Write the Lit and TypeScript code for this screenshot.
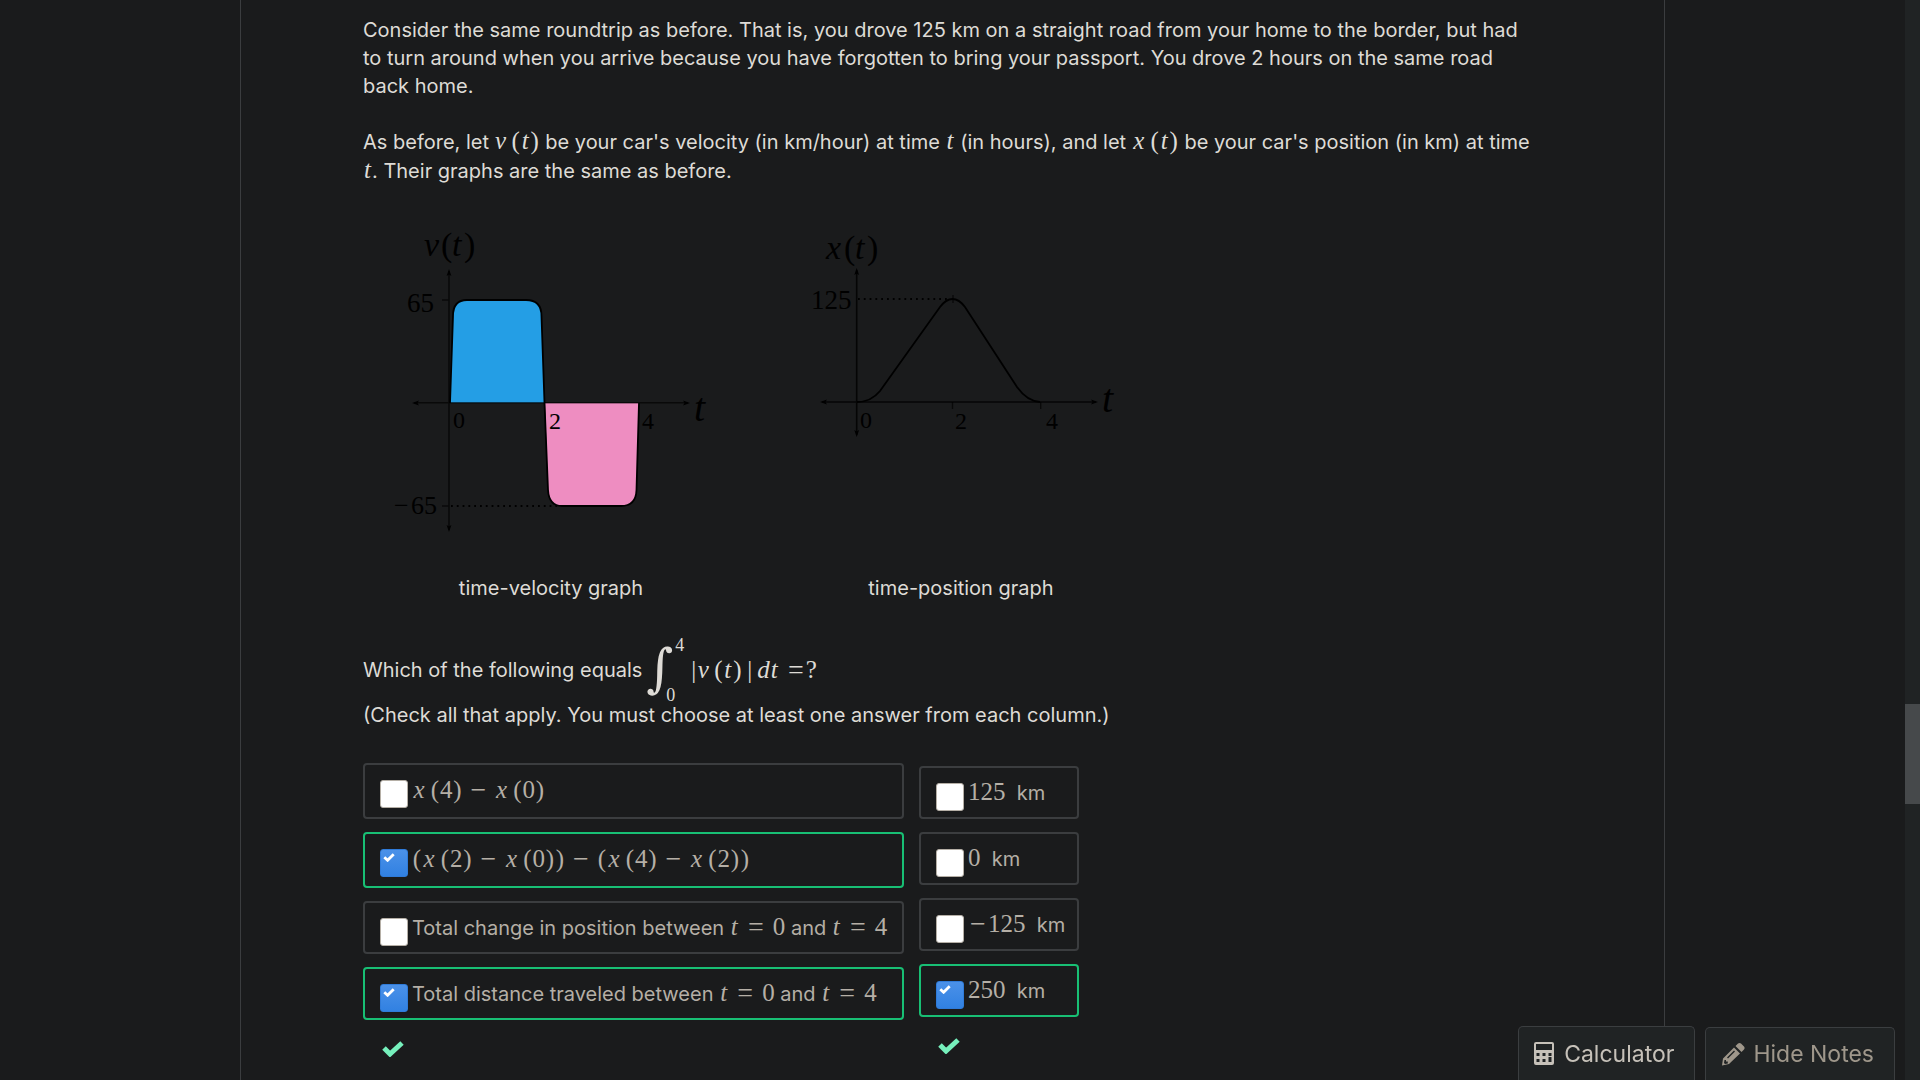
import { LitElement, html, svg, css } from "lit";
import { customElement, property } from "lit/decorators.js";

const KINDS: Record<string, string> = {
  x: "var wide",
  v: "var mid",
  d: "var mid",
  t: "var",
  "(": "open",
  ")": "close",
  "|": "bar",
  "−": "op",
  "=": "op rel",
  "~": "neg",
  "?": "query",
};

/** Typesets a short formula. "~" stands for a unary minus. */
const math = (source: string) => html`<span class="math"
  >${[...source.replace(/ /g, "")].map(
    (c) => html`<span class=${KINDS[c] ?? "num"}>${c === "~" ? "−" : c}</span>`
  )}</span
>`;

const mathStyles = css`
  .math {
    font-family: "Liberation Serif", "Times New Roman", serif;
    font-size: 25px;
    line-height: 1;
    white-space: nowrap;
  }
  .math span {
    display: inline-block;
    text-align: center;
    line-height: 1;
  }
  .math .var {
    font-style: italic;
    min-width: 9px;
  }
  .math .mid {
    min-width: 12px;
  }
  .math .wide {
    min-width: 14px;
  }
  .math .open,
  .math .close {
    min-width: 10px;
  }
  .math .var + .open,
  .math .close + .bar {
    margin-left: 4px;
  }
  .math .bar {
    min-width: 7px;
  }
  .math .close + .bar {
    margin-right: 4px;
  }
  .math .op,
  .math .neg {
    min-width: 20px;
    font-size: 28px;
    line-height: 0;
    vertical-align: -1px;
  }
  .math .op {
    margin: 0 6px;
  }
  .math .rel {
    margin: 0 7px;
  }
  .math .rel:has(+ .query) {
    margin-right: 0;
  }
`;

@customElement("answer-option")
export class AnswerOption extends LitElement {
  @property({ type: Boolean }) checked = false;
  @property({ type: Boolean }) tall = false;
  @property({ attribute: false }) content: unknown = "";

  static styles = [
    mathStyles,
    css`
      :host {
        display: block;
      }
      .option {
        box-sizing: border-box;
        display: flex;
        align-items: center;
        gap: 4px;
        min-height: 53px;
        padding: 0 15px;
        border: 2px solid #3b3d3f;
        border-radius: 4px;
        color: #b5afa6;
        white-space: nowrap;
        cursor: pointer;
      }
      .tall {
        min-height: 56px;
      }
      .correct {
        border-color: #18bf74;
      }
      .tick {
        display: grid;
        padding-top: 8px;
      }
      .tall .tick {
        padding-top: 6px;
      }
      .box,
      .mark {
        grid-area: 1 / 1;
      }
      .box {
        appearance: none;
        box-sizing: border-box;
        width: 28px;
        height: 28px;
        margin: 0;
        border: 1px solid #b5afa6;
        border-radius: 3px;
        background: #fff;
      }
      .box:checked {
        border-color: #2f7bd9;
        background: linear-gradient(#4b91e8, #3181e2);
      }
      .mark {
        width: 12px;
        height: 9px;
        margin: 4px 3px;
        pointer-events: none;
      }
    `,
  ];

  render() {
    return html`<label
      class="option ${this.tall ? "tall" : ""} ${this.checked ? "correct" : ""}"
    >
      <span class="tick">
        <input class="box" type="checkbox" .checked=${this.checked} />
        ${this.checked
          ? html`<svg class="mark" viewBox="0 0 12 9" aria-hidden="true">
              <path d="M1.3 4.3 4.6 7.3 10.7 1.3" fill="none" stroke="#fff" stroke-width="2.8" />
            </svg>`
          : ""}
      </span>
      <span>${this.content}</span>
    </label>`;
  }
}

const arrow = (x: number, y: number, angle: number) =>
  svg`<path d="M0 0 L-7 -2.4 L-5.4 0 L-7 2.4 Z" fill="#000" transform="translate(${x} ${y}) rotate(${angle})" />`;

@customElement("app-root")
export class AppRoot extends LitElement {
  static styles = [
    mathStyles,
    css`
      :host {
        display: block;
        font-family: Inter, "Liberation Sans", sans-serif;
        font-size: 20px;
        line-height: 28px;
        color: #dedbd6;
      }
      .screen {
        display: flex;
        height: 100vh;
        overflow: hidden;
        background: #1a1b1c;
      }
      .page {
        flex: 1;
        padding: 0 240px;
        overflow: hidden;
      }
      .lesson {
        box-sizing: border-box;
        min-height: 100%;
        padding: 16px 128px 0 122px;
        border: solid #3b3d3f;
        border-width: 0 1px;
      }
      p {
        margin: 0 0 28px;
      }
      .lead {
        margin-bottom: 24px;
        line-height: 29px;
      }
      .figures {
        display: flex;
        gap: 34px;
      }
      figure {
        width: 376px;
        margin: 0;
      }
      .graph {
        display: block;
        width: 100%;
        margin-bottom: 24px;
        font-family: "Liberation Serif", "Times New Roman", serif;
      }
      .graph .it {
        font-style: italic;
      }
      figcaption {
        text-align: center;
      }
      .question {
        display: flex;
        align-items: center;
        height: 63px;
        margin: 36px 0 0;
      }
      .integral {
        display: flex;
        align-items: center;
        margin: 0 6px 0 4px;
        font-family: "Liberation Serif", serif;
      }
      .sign {
        width: 20px;
        padding-bottom: 4px;
        font-family: "DejaVu Serif", "Liberation Serif", serif;
        font-size: 52px;
        font-style: italic;
        line-height: 52px;
      }
      .limits {
        display: flex;
        flex-direction: column;
        justify-content: space-between;
        height: 66px;
        font-size: 18px;
        line-height: 16px;
      }
      .upper {
        padding-left: 9px;
      }
      .hint {
        margin-bottom: 34px;
      }
      .columns {
        display: flex;
        align-items: flex-start;
        gap: 15px;
      }
      .answers {
        display: flex;
        flex-direction: column;
        gap: 13px;
      }
      .first {
        width: 541px;
      }
      .second {
        width: 160px;
        padding-top: 3px;
      }
      .result {
        width: 22px;
        height: 16px;
        margin: 8px 19px;
      }
      .track {
        flex: none;
        box-sizing: border-box;
        width: 15px;
        padding-top: 704px;
        background: #202324;
      }
      .thumb {
        height: 100px;
        background: #46494b;
      }
      .tools {
        position: fixed;
        right: 25px;
        bottom: 0;
        display: flex;
        align-items: flex-end;
        gap: 10px;
      }
      .tool {
        display: flex;
        align-items: center;
        gap: 10px;
        height: 54px;
        padding: 0 20px 0 15px;
        border: 1px solid #3b3e40;
        border-bottom: 0;
        border-radius: 5px 5px 0 0;
        background: #202324;
        color: #c6c1b9;
        font: inherit;
        font-size: 23px;
      }
      .notes {
        gap: 8px;
        height: 53px;
        color: #9f978b;
      }
      .tool svg {
        width: 20px;
        height: 23px;
      }
      .tool .pencil {
        width: 24px;
        height: 24px;
      }
    `,
  ];

  private velocityGraph() {
    return svg`<svg class="graph" viewBox="1 0 376 340" role="img" aria-label="Velocity against time">
      <path d="M88 193 L91 106 Q91 90 105 90 H164 Q179.500 90 179.500 106 L182.500 193 Z" fill="#249ee5" />
      <path d="M183 193 L186 280 Q187 296 200 296 H259 Q274 296 274.500 280 L277 193 Z" fill="#ee8dc1" />
      <g fill="none" stroke="#000">
        <path d="M52 192.700 H326 M87 61 V320 M80 90 H87 M80 296 H87" stroke-opacity="0.65" stroke-width="1.600" />
        <path d="M89 296 H196" stroke-width="1.800" stroke-dasharray="1.800 4" />
        <path d="M88 193 L91 106 Q91 90 105 90 H164 Q179.500 90 179.500 106 L182.500 193 L186 280 Q187 296 200 296 H259 Q274 296 274.500 280 L277 193" stroke-width="1.800" />
      </g>
      ${arrow(328, 193, 0)} ${arrow(50, 193, 180)} ${arrow(87, 59, -90)} ${arrow(87, 322, 90)}
      <g font-size="26">
        <text class="it" y="46" font-size="34"><tspan x="62">v</tspan><tspan x="90">t</tspan></text>
        <text y="46" font-size="34"><tspan x="79">(</tspan><tspan x="102">)</tspan></text>
        <text x="45" y="102" font-size="27">65</text>
        <text y="304"><tspan x="32">−</tspan><tspan x="49">65</tspan></text>
        <text y="218" font-size="24"><tspan x="91">0</tspan></text>
        <text y="219" font-size="24"><tspan x="187">2</tspan><tspan x="280">4</tspan></text>
        <text class="it" x="332" y="211" font-size="40">t</text>
      </g>
    </svg>`;
  }

  private positionGraph() {
    return svg`<svg class="graph" viewBox="1 0 376 340" role="img" aria-label="Position against time">
      <g fill="none" stroke="#000">
        <path d="M50 192 H324 M84.700 60 V225" stroke-opacity="0.8" stroke-width="1.600" />
        <path d="M180.500 192 V199 M268.700 192 V199 M181 85 V93" stroke-opacity="0.65" stroke-width="1.400" />
        <path d="M86 89 H176" stroke-width="1.800" stroke-dasharray="1.800 4" />
        <path d="M85 192 Q99 192 108 181 L168 97 Q174 89 180.500 89 Q187 89 193 97 L245 177 Q255 191 268 192" stroke-width="1.800" />
      </g>
      ${arrow(326, 192, 0)} ${arrow(48, 192, 180)} ${arrow(84.7, 58, -90)} ${arrow(84.7, 227, 90)}
      <text class="it" y="49" font-size="34"><tspan x="54">x</tspan><tspan x="83">t</tspan></text>
      <text y="49" font-size="34"><tspan x="72">(</tspan><tspan x="95">)</tspan></text>
      <text x="39" y="99" font-size="27">125</text>
      <text y="218" font-size="24"><tspan x="88">0</tspan></text>
      <text y="219" font-size="24"><tspan x="183">2</tspan><tspan x="274">4</tspan></text>
      <text class="it" x="330" y="202" font-size="40">t</text>
    </svg>`;
  }

  private resultMark() {
    return html`<svg class="result" viewBox="0 0 22 16" role="img" aria-label="Correct">
      <path d="M2 7 8 13 20 2" fill="none" stroke="#76f0bc" stroke-width="5" />
    </svg>`;
  }

  render() {
    return html`<div class="screen">
      <main class="page">
        <div class="lesson">
          <p>
            Consider the same roundtrip as before. That is, you drove 125 km on a straight road from
            your home to the border, but had to turn around when you arrive because you have
            forgotten to bring your passport. You drove 2 hours on the same road back home.
          </p>
          <p class="lead">
            As before, let ${math("v(t)")} be your car's velocity (in km/hour) at time ${math("t")}
            (in hours), and let ${math("x(t)")} be your car's position (in km) at time
            ${math("t")}. Their graphs are the same as before.
          </p>
          <div class="figures">
            <figure>
              ${this.velocityGraph()}
              <figcaption>time-velocity graph</figcaption>
            </figure>
            <figure>
              ${this.positionGraph()}
              <figcaption>time-position graph</figcaption>
            </figure>
          </div>
          <p class="question">
            <span>Which of the following equals</span>
            <span class="integral">
              <span class="sign">∫</span>
              <span class="limits"><span class="upper">4</span><span>0</span></span>
            </span>
            ${math("|v(t)|dt=?")}
          </p>
          <p class="hint">
            (Check all that apply. You must choose at least one answer from each column.)
          </p>
          <div class="columns">
            <div class="answers first">
              <answer-option tall .content=${math("x(4)−x(0)")}></answer-option>
              <answer-option tall checked .content=${math("(x(2)−x(0))−(x(4)−x(2))")}></answer-option>
              <answer-option
                .content=${html`Total change in position between ${math("t=0")} and ${math("t=4")}`}
              ></answer-option>
              <answer-option
                checked
                .content=${html`Total distance traveled between ${math("t=0")} and ${math("t=4")}`}
              ></answer-option>
              ${this.resultMark()}
            </div>
            <div class="answers second">
              <answer-option .content=${html`${math("125")}&nbsp; km`}></answer-option>
              <answer-option .content=${html`${math("0")}&nbsp; km`}></answer-option>
              <answer-option .content=${html`${math("~125")}&nbsp; km`}></answer-option>
              <answer-option checked .content=${html`${math("250")}&nbsp; km`}></answer-option>
              ${this.resultMark()}
            </div>
          </div>
        </div>
      </main>
      <div class="track"><div class="thumb"></div></div>
      <div class="tools">
        <button class="tool" type="button">
          <svg viewBox="2 1 20 23" aria-hidden="true">
            <path
              fill="currentColor"
              fill-rule="evenodd"
              d="M4 1H20Q22 1 22 3V22Q22 24 20 24H4Q2 24 2 22V3Q2 1 4 1ZM4 3V9H20V3ZM4.500 12V15H7.500V12ZM10.500 12V15H13.500V12ZM16.500 12V15H19.500V12ZM4.500 18V21H7.500V18ZM10.500 18V21H13.500V18ZM16.500 16V21H19.500V16Z"
            />
          </svg>
          Calculator
        </button>
        <button class="tool notes" type="button">
          <svg class="pencil" viewBox="0 0 24 24" aria-hidden="true">
            <path
              fill="currentColor"
              fill-rule="evenodd"
              d="M1 23.500 2 16.500 13 5.500 19 11.500 8 22ZM14.500 4 17 1.500Q18.500 0.300 20 1.500L23 4.500Q24.200 6 23 7.500L20.500 10ZM3.500 18 3 21 4 22 6.800 21.500V19.500H5V18ZM6 15.500 7 16.500 14 9.500 13 8.500Z"
            />
          </svg>
          Hide Notes
        </button>
      </div>
    </div>`;
  }
}
